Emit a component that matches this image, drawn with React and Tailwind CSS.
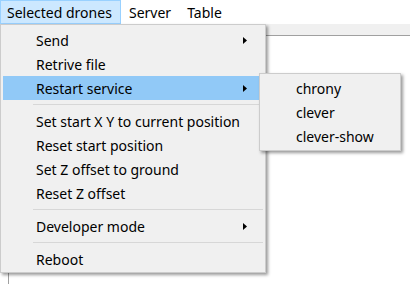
import React from "react";

const font = { fontFamily: '"Noto Sans", sans-serif' };

function Arrow() {
  return (
    <svg width="4" height="7" viewBox="0 0 4 7" className="block">
      <path d="M0 0 L4 3.5 L0 7 Z" fill="#000" />
    </svg>
  );
}

function Item({ label, arrow, active }) {
  return (
    <div
      className={
        "relative flex h-[24px] items-center pl-[33px] pr-[16px] mx-[2px] " +
        (active ? "bg-[#91c9f7]" : "")
      }
    >
      <span className="flex-1 whitespace-nowrap">{label}</span>
      {arrow && <Arrow />}
    </div>
  );
}

function Sep() {
  return (
    <div className="h-[9px] flex items-center pl-[32px] pr-[2px]">
      <div className="h-px w-full bg-[#d7d7d7]" />
    </div>
  );
}

export default function App() {
  return (
    <div
      className="relative w-[411px] h-[284px] overflow-hidden bg-white text-[14px] text-black"
      style={font}
    >
      <div className="flex h-[24px] items-center">
        <div className="h-[24px] w-[121px] flex items-center pl-[6px] pt-[1px] bg-[#cce8ff] border border-[#99d1ff]">
          Selected drones
        </div>
        <div className="pl-[8px] pt-[1px]">Server</div>
        <div className="pl-[16px] pt-[1px]">Table</div>
      </div>
      <div className="h-[11px] bg-[#f0f0f0] mr-[1px]" />
      <div className="ml-[8px] mr-[1px] h-[260px] border-l border-t border-[#a0a0a0]" />

      <div className="absolute left-0 top-[24px] w-[266px] bg-[#f0f0f0] border border-[#cccccc] pt-[3px] pb-[1px] shadow-[2px_2px_3px_rgba(0,0,0,0.4)]">
        <Item label="Send" arrow />
        <Item label="Retrive file" />
        <Item label="Restart service" arrow active />
        <Sep />
        <Item label="Set start X Y to current position" />
        <Item label="Reset start position" />
        <Item label="Set Z offset to ground" />
        <Item label="Reset Z offset" />
        <Sep />
        <Item label="Developer mode" arrow />
        <Sep />
        <Item label="Reboot" />
      </div>

      <div className="absolute left-[259px] top-[73px] w-[142px] h-[78px] bg-[#f0f0f0] border border-[#cccccc] pt-[2px] shadow-[2px_2px_3px_rgba(0,0,0,0.4)]">
        <div className="h-[24px] flex items-center pl-[36px]">chrony</div>
        <div className="h-[24px] flex items-center pl-[36px]">clever</div>
        <div className="h-[24px] flex items-center pl-[36px]">clever-show</div>
      </div>
    </div>
  );
}
